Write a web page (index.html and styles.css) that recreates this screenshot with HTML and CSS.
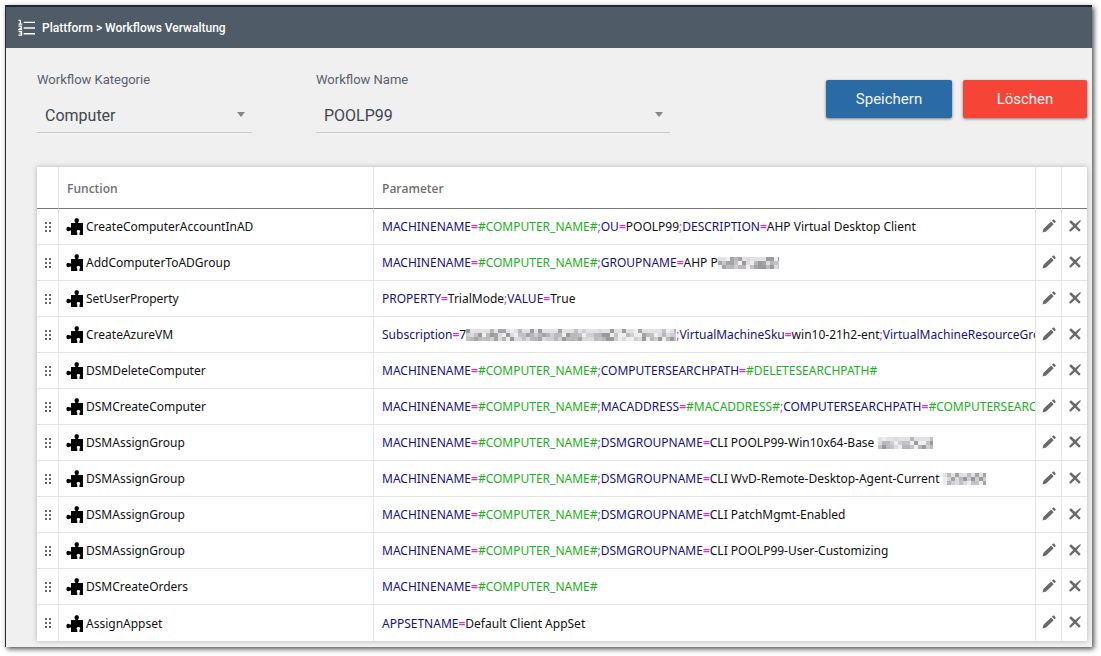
FILE: index.html
```html
<!DOCTYPE html>
<html lang="de">
<head>
    <meta charset="UTF-8">
    <meta name="viewport" content="width=device-width, initial-scale=1.0">
    <title>Workflows Verwaltung</title>
    <link rel="stylesheet" href="styles.css">
</head>
<body>

    <!-- icons used by the table rows -->
    <svg class="sprite" aria-hidden="true">
        <symbol id="icon-grip" viewBox="0 0 6 10">
            <path d="M0 0h2v2H0zM4 0h2v2H4zM0 4h2v2H0zM4 4h2v2H4zM0 8h2v2H0zM4 8h2v2H4z"/>
        </symbol>
        <symbol id="icon-puzzle" viewBox="0 0 18 17">
            <path d="M5 5h4.600C8.600 4 8.300 2.600 8.700 1.500C9.200-.2 12.300-.2 12.800 1.500C13.100 2.600 12.800 4 11.900 5H17v12h-3.500v-2.300c.8-.7.900-1.700.2-2.300c-.7-.6-1.900-.6-2.600 0c-.7.600-.6 1.600.2 2.300V17H5v-4.500H3.800C3.400 13.300 2.400 13.400 1.500 13C0 12.300 0 9.700 1.500 9C2.400 8.600 3.400 8.900 3.800 9.600H5z"/>
        </symbol>
        <symbol id="icon-pencil" viewBox="0 0 14 14">
            <path d="M.5 13.500l1-3.800 7.600-7.200 2.600 2.700-7.600 7.300zM9.900 1.700l1-1c.4-.4.900-.4 1.300 0l1.200 1.300c.4.400.4.900 0 1.300l-1 1z"/>
        </symbol>
        <symbol id="icon-delete" viewBox="0 0 12 12">
            <path d="M.2 2L2 .2l4.200 3.900L11.200.1l.7.800L7.700 5.900l4 4.200-1.600 1.600L6 7.700 1.700 11.800.1 10.300 4.200 6z"/>
        </symbol>
    </svg>

    <div class="window">
        <header class="topbar">
            <svg class="topbar-icon" viewBox="0 0 18 18" aria-hidden="true">
                <path d="M6 3h12M6 9h12M6 15h12" stroke="#fff" stroke-width="1.500" fill="none"/>
                <path d="M.5 1h2v4M.5 5h4M.5 7h3v2L1 10.500h3.500M.5 12.500h3.300v4H.5M1.500 14.500h2" stroke="#fff" stroke-width="1.300" fill="none"/>
            </svg>
            <h1>Plattform &gt; Workflows Verwaltung</h1>
        </header>

        <main>
            <div class="toolbar">
                <div class="field field-category">
                    <label for="category">Workflow Kategorie</label>
                    <div class="select-box">
                        <select id="category"><option>Computer</option></select>
                    </div>
                </div>
                <div class="field field-name">
                    <label for="workflow">Workflow Name</label>
                    <div class="select-box">
                        <select id="workflow"><option>POOLP99</option></select>
                    </div>
                </div>
                <div class="actions">
                    <button type="button" class="btn btn-save">Speichern</button>
                    <button type="button" class="btn btn-delete">Löschen</button>
                </div>
            </div>

            <table class="workflow-table">
                <colgroup>
                    <col class="col-grip">
                    <col class="col-function">
                    <col>
                    <col class="col-edit">
                    <col class="col-delete">
                </colgroup>
                <thead>
                    <tr>
                        <th></th>
                        <th>Function</th>
                        <th>Parameter</th>
                        <th></th>
                        <th></th>
                    </tr>
                </thead>
                <tbody id="table-body"></tbody>
            </table>
        </main>
    </div>

    <script>
        // {n} in a value is a masked part, n pixels wide
        const rows = [
            ["CreateComputerAccountInAD", "MACHINENAME=#COMPUTER_NAME#;OU=POOLP99;DESCRIPTION=AHP Virtual Desktop Client"],
            ["AddComputerToADGroup", "MACHINENAME=#COMPUTER_NAME#;GROUPNAME=AHP P{61}"],
            ["SetUserProperty", "PROPERTY=TrialMode;VALUE=True"],
            ["CreateAzureVM", "Subscription=7{210};VirtualMachineSku=win10-21h2-ent;VirtualMachineResourceGroup"],
            ["DSMDeleteComputer", "MACHINENAME=#COMPUTER_NAME#;COMPUTERSEARCHPATH=#DELETESEARCHPATH#"],
            ["DSMCreateComputer", "MACHINENAME=#COMPUTER_NAME#;MACADDRESS=#MACADDRESS#;COMPUTERSEARCHPATH=#COMPUTERSEARCHPATH#"],
            ["DSMAssignGroup", "MACHINENAME=#COMPUTER_NAME#;DSMGROUPNAME=CLI POOLP99-Win10x64-Base {55}"],
            ["DSMAssignGroup", "MACHINENAME=#COMPUTER_NAME#;DSMGROUPNAME=CLI WvD-Remote-Desktop-Agent-Current {43}"],
            ["DSMAssignGroup", "MACHINENAME=#COMPUTER_NAME#;DSMGROUPNAME=CLI PatchMgmt-Enabled"],
            ["DSMAssignGroup", "MACHINENAME=#COMPUTER_NAME#;DSMGROUPNAME=CLI POOLP99-User-Customizing"],
            ["DSMCreateOrders", "MACHINENAME=#COMPUTER_NAME#"],
            ["AssignAppset", "APPSETNAME=Default Client AppSet"]
        ];

        const shades = ["#c3c2c6", "#a5a4a8", "#dcdadc", "#b5b8bb", "#9b999e", "#eeeeef", "#bfb9bb", "#cdd0d3"];

        function mask(width) {
            let cells = "";
            let seed = width;
            for (let x = 0; x < width; x += 4) {
                for (let y = 0; y < 12; y += 4) {
                    seed = (seed * 1103 + 12345) % 65521;
                    // the top line stays lighter than the other two
                    const shade = y === 0 && seed % 3 ? "#e2e2e4" : shades[seed % shades.length];
                    cells += `<rect x="${x}" y="${y}" width="4" height="4" fill="${shade}"/>`;
                }
            }
            return `<svg class="mask" style="width: ${width}px" aria-hidden="true">${cells}</svg>`;
        }

        function formatParameter(text) {
            return text.split(";").map(pair => {
                const [key, value] = pair.split("=");
                let html = `<span class="key">${key}</span>`;
                if (value !== undefined) {
                    const type = value.startsWith("#") ? "variable" : "value";
                    html += `<span class="sign equals">=</span><span class="${type}">${value.replace(/\{(\d+)\}/, (m, w) => mask(Number(w)))}</span>`;
                }
                return html;
            }).join('<span class="sign">;</span>');
        }

        function icon(name) {
            return `<svg class="icon icon-${name}" aria-hidden="true"><use href="#icon-${name}"/></svg>`;
        }

        document.getElementById("table-body").innerHTML = rows.map(([name, parameter]) => `
            <tr>
                <td><button type="button" class="icon-btn grip" aria-label="Verschieben">${icon("grip")}</button></td>
                <td><div class="function-name">${icon("puzzle")}${name}</div></td>
                <td class="parameter">${formatParameter(parameter)}</td>
                <td><button type="button" class="icon-btn" aria-label="Bearbeiten">${icon("pencil")}</button></td>
                <td><button type="button" class="icon-btn" aria-label="Entfernen">${icon("delete")}</button></td>
            </tr>
        `).join("");
    </script>

</body>
</html>
```
FILE: styles.css
```css
* {
    box-sizing: border-box;
}

body {
    margin: 0;
    padding: 5px 9px 9px 5px;
    background-color: #fff;
    font-family: Roboto, sans-serif;
}

.sprite {
    display: none;
}

.window {
    border-top: 2px solid #1d282e;
    border-left: 1px solid #2c2f31;
    background-color: #f0f0f0;
    box-shadow: 2px 2px 5px rgba(0, 0, 0, 0.7);
}

.topbar {
    display: flex;
    align-items: center;
    gap: 7px;
    height: 41px;
    padding-left: 12px;
    background-color: #4f5b66;
    color: #fff;
}

.topbar-icon {
    width: 17px;
    height: 18px;
}

.topbar h1 {
    margin: 0;
    font-size: 12px;
    font-weight: 500;
}

main {
    padding: 24px 5px 6px 31px;
}

.toolbar {
    display: flex;
    align-items: flex-start;
    gap: 64px;
    margin-bottom: 34px;
}

.field label {
    display: block;
    font-size: 13px;
    line-height: 16px;
    color: #59616c;
}

.field-category {
    flex: 0 1 215px;
}

.field-name {
    flex: 0 1 354px;
}

.select-box {
    position: relative;
    margin-top: 12px;
}

.select-box::after {
    content: "";
    position: absolute;
    top: 12px;
    right: 7px;
    border: 4px solid transparent;
    border-top: 5px solid #868686;
    border-bottom: 0;
    pointer-events: none;
}

select {
    appearance: none;
    width: 100%;
    height: 33px;
    padding: 0 24px 1px 8px;
    border: 0;
    border-bottom: 1px solid #ccc;
    border-radius: 0;
    background: transparent;
    font-family: inherit;
    font-size: 16px;
    color: #41474e;
}

.actions {
    display: flex;
    gap: 11px;
    margin-top: 8px;
    margin-left: auto;
}

.btn {
    width: 126px;
    height: 38px;
    border: 0;
    border-radius: 2px;
    box-shadow: 0 1px 3px rgba(0, 0, 0, 0.5);
    font-family: inherit;
    font-size: 15px;
    color: #f0f4f8;
    cursor: pointer;
}

.btn-save {
    background-color: #2a6ba5;
}

.btn-delete {
    width: 124px;
    background-color: #f64436;
}

.workflow-table {
    width: 100%;
    table-layout: fixed;
    border-collapse: separate;
    border-spacing: 0;
    background-color: #fff;
    box-shadow: 0 0 5px rgba(0, 0, 0, 0.25);
    font-family: "Noto Sans", sans-serif;
    font-size: 12px;
}

.col-grip {
    width: 22px;
}

.col-function {
    width: 315px;
}

.col-edit {
    width: 26px;
}

.col-delete {
    width: 25px;
}

th,
td {
    height: 36px;
    padding: 0;
    border-right: 1px solid #e3e3e3;
    border-bottom: 1px solid #e3e3e3;
    text-align: left;
}

th:last-child,
td:last-child {
    border-right: 0;
}

tr:last-child td {
    border-bottom: 0;
}

th {
    height: 42px;
    padding: 2px 0 0 8px;
    border-bottom-color: #777;
    font-family: "Open Sans", sans-serif;
    font-weight: 600;
    color: #707070;
}

td {
    color: #111;
}

.function-name {
    display: flex;
    align-items: center;
    gap: 2px;
    padding-left: 7px;
}

.parameter {
    padding-left: 8px;
    overflow: hidden;
    white-space: nowrap;
}

.key {
    color: #16137c;
}

.sign {
    color: #dc2bd8;
}

.equals {
    font-weight: 700;
}

.variable {
    color: #22b022;
}

.mask {
    height: 12px;
    vertical-align: -2px;
}

.icon-btn {
    display: flex;
    align-items: center;
    justify-content: center;
    width: 100%;
    height: 24px;
    padding: 0 0 2px;
    border: 0;
    background: transparent;
    color: #6a6a6a;
    cursor: pointer;
}

.grip {
    padding: 0;
    color: #666;
    cursor: move;
}

.icon {
    flex: none;
    fill: currentColor;
}

.icon-grip {
    width: 6px;
    height: 10px;
}

.icon-puzzle {
    width: 18px;
    height: 17px;
    fill: #000;
}

.icon-pencil {
    width: 14px;
    height: 14px;
}

.icon-delete {
    width: 12px;
    height: 12px;
}
```
